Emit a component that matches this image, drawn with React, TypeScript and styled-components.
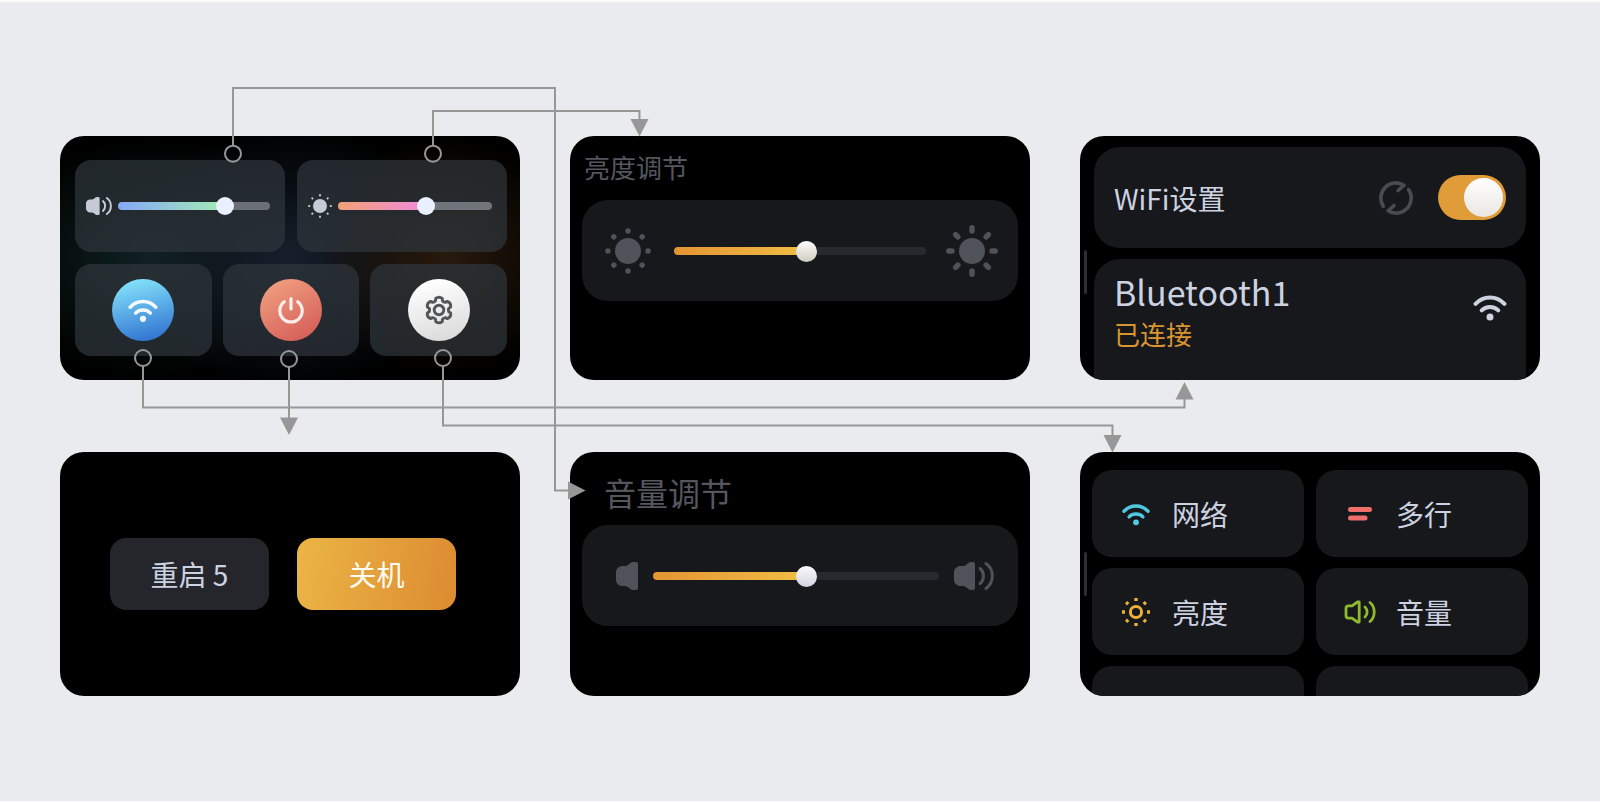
import React, { useId, useState } from 'react';
import styled, { createGlobalStyle } from 'styled-components';

const GlobalStyle = createGlobalStyle`
  *, *::before, *::after { box-sizing: border-box; }
  body {
    margin: 0;
    background: #e9ebef;
    font-family: "Noto Sans CJK SC", "Noto Sans", sans-serif;
  }
  h2, p { margin: 0; padding: 0; }
  button, input { font: inherit; }
  svg { display: block; flex: none; }
`;

const Board = styled.main`
  position: relative;
  display: grid;
  grid-template-columns: repeat(3, minmax(0, 1fr));
  column-gap: 50px;
  row-gap: 72px;
  padding: 134px 60px 105px;
  border-top: 2px solid #fafafb;
  border-bottom: 1px solid #fafafb;
`;

const Screen = styled.section<{ $pad: string }>`
  position: relative;
  display: flex;
  flex-direction: column;
  height: 244px;
  overflow: hidden;
  border-radius: 24px;
  background: #000;
  padding: ${(p) => p.$pad};
`;

const HomeScreen = styled(Screen)`
  gap: 12px;
  background:
    radial-gradient(ellipse 130px 120px at 84% 49%, rgba(44, 28, 15, 0.9) 0%, rgba(38, 24, 12, 0.6) 45%, transparent 100%),
    radial-gradient(ellipse 170px 130px at 50% 50%, rgba(22, 31, 44, 1) 0%, rgba(19, 27, 38, 0.55) 50%, transparent 100%),
    radial-gradient(ellipse 170px 120px at 20% 50%, rgba(16, 34, 35, 1) 0%, rgba(13, 29, 30, 0.55) 50%, transparent 100%),
    #000;
`;

const TileRow = styled.div<{ $gap: number }>`
  display: flex;
  flex: 1;
  gap: ${(p) => p.$gap}px;
`;

const GlassTile = styled.div`
  display: flex;
  flex: 1;
  align-items: center;
  justify-content: center;
  border-radius: 16px;
  background: rgba(47, 54, 60, 0.7);
`;

const SliderTile = styled(GlassTile)`
  gap: 6px;
  padding: 0 15px 0 11px;
  min-width: 0;
`;

const RoundButton = styled.button<{ $fill: string }>`
  display: grid;
  place-items: center;
  width: 62px;
  height: 62px;
  padding: 0;
  border: 0;
  border-radius: 50%;
  background: ${(p) => p.$fill};
  cursor: pointer;
`;

type RangeLook = { $fill: string; $rail: string; $thumb: string; $size: number };

const Range = styled.input<RangeLook>`
  appearance: none;
  flex: 1;
  min-width: 0;
  height: ${(p) => p.$size}px;
  margin: 0;
  background: none;
  cursor: pointer;

  &::-webkit-slider-runnable-track {
    height: 8px;
    border-radius: 4px;
    background:
      ${(p) => p.$fill} 0 0 / var(--level) 100% no-repeat,
      ${(p) => p.$rail};
  }
  &::-webkit-slider-thumb {
    appearance: none;
    width: ${(p) => p.$size}px;
    height: ${(p) => p.$size}px;
    margin-top: ${(p) => Math.round((8 - p.$size) / 2)}px;
    border-radius: 50%;
    background: ${(p) => p.$thumb};
  }
`;

const Title = styled.h2<{ $size: number; $indent: number }>`
  padding-left: ${(p) => p.$indent}px;
  font-size: ${(p) => p.$size}px;
  line-height: 38px;
  font-weight: 400;
  color: #55575e;
`;

const SliderPanel = styled.div<{ $pad: string; $gap: number }>`
  display: flex;
  align-items: center;
  gap: ${(p) => p.$gap}px;
  height: 101px;
  margin-top: 14px;
  padding: ${(p) => p.$pad};
  border-radius: 26px;
  background: #17181c;
  color: #50525a;
`;

const ListPanel = styled.div`
  display: flex;
  flex: none;
  align-items: center;
  height: 101px;
  padding: 0 20px;
  border-radius: 26px;
  background: #17181c;
  color: #cdd2e0;
`;

const DevicePanel = styled(ListPanel)`
  align-items: flex-start;
  height: auto;
  margin-top: 11px;
  padding: 11px 19px 60px 20px;
`;

const Label = styled.label`
  flex: 1;
  font-size: 28px;
  line-height: 40px;
`;

const Refresh = styled.button`
  display: grid;
  place-items: center;
  margin-right: 24px;
  padding: 0;
  border: 0;
  background: none;
  color: #474b52;
  cursor: pointer;
`;

const Toggle = styled.input`
  appearance: none;
  width: 68px;
  height: 45px;
  margin: 0;
  padding: 3px;
  border-radius: 23px;
  background: #50525a;
  cursor: pointer;

  &::before {
    content: "";
    display: block;
    width: 39px;
    height: 39px;
    border-radius: 50%;
    background: linear-gradient(#ffffff, #e9e7e3);
  }
  &:checked { background: #e09c38; }
  &:checked::before { margin-left: 23px; }
`;

const Device = styled.div`
  flex: 1;
`;

const DeviceName = styled.p`
  font-size: 34px;
  line-height: 44px;
`;

const DeviceState = styled.p`
  font-size: 26px;
  line-height: 40px;
  color: #d99530;
`;

const Signal = styled.div`
  padding-top: 20px;
`;

const ScrollMark = styled.span<{ $top: string }>`
  position: absolute;
  left: 4px;
  top: ${(p) => p.$top};
  width: 3px;
  height: 44px;
  border-radius: 2px;
  background: #2e2e32;
`;

const PowerRow = styled.div`
  display: flex;
  gap: 28px;
`;

const PowerButton = styled.button<{ $primary?: boolean }>`
  width: 159px;
  height: 72px;
  padding: 0;
  border: 0;
  border-radius: 16px;
  font-size: 28px;
  line-height: 40px;
  background: ${(p) => (p.$primary ? 'linear-gradient(100deg, #ebb545 0%, #dd8d32 95%)' : '#25262b')};
  color: ${(p) => (p.$primary ? '#fffdf4' : '#cdd2e0')};
  cursor: pointer;
`;

const MenuGrid = styled.div`
  display: grid;
  grid-template-columns: 1fr 1fr;
  grid-auto-rows: 87px;
  column-gap: 12px;
  row-gap: 11px;
`;

const MenuButton = styled.button`
  display: flex;
  align-items: center;
  gap: 20px;
  padding: 0 28px;
  border: 0;
  border-radius: 20px;
  background: #17181c;
  color: #cdd2e0;
  font-size: 28px;
  line-height: 40px;
  cursor: pointer;
`;

const Overlay = styled.svg`
  position: absolute;
  left: 0;
  top: -2px;
  width: 100%;
  height: calc(100% + 3px);
  pointer-events: none;
`;

/* ---------- icons ---------- */

type WifiProps = { w: number; color?: string; inset?: number };

const WifiIcon = ({ w, color = 'currentColor', inset = 0 }: WifiProps) => (
  <svg
    width={w}
    height={w}
    viewBox={`${-inset} ${-inset} ${32 + inset * 2} ${32 + inset * 2}`}
    fill="none"
    stroke={color}
    strokeWidth="3.800"
    strokeLinecap="round"
  >
    <path d="M2.4 13C9.800 5 22.200 5 29.600 13" />
    <path d="M8.200 19.200C12.400 15 19.600 15 23.800 19.200" />
    <circle cx="16" cy="25.400" r="3.300" fill={color} stroke="none" />
  </svg>
);

const angles = [0, 45, 90, 135, 180, 225, 270, 315];

type SunProps = {
  size: number;
  core: number;
  from: number;
  to: number;
  ray: number;
  color?: string;
  hollow?: boolean;
  cap?: 'round' | 'butt';
};

const SunIcon = ({ size, core, from, to, ray, color = 'currentColor', hollow, cap = 'round' }: SunProps) => (
  <svg width={size} height={size} viewBox={`${-size / 2} ${-size / 2} ${size} ${size}`}>
    <circle r={core} fill={hollow ? 'none' : color} stroke={hollow ? color : 'none'} strokeWidth="3" />
    {angles.map((a) => (
      <line key={a} y1={-from} y2={-to} stroke={color} strokeWidth={ray} strokeLinecap={cap} transform={`rotate(${a})`} />
    ))}
  </svg>
);

const HornIcon = () => (
  <svg width="22" height="28" viewBox="0 0 22 28">
    <path d="M5 4H9Q11 4 12.500 2.500L14.500 1Q15.500 0 17 0H20Q22 0 22 2V26Q22 28 20 28H17Q15.500 28 14.500 27L12.500 25.500Q11 24 9 24H5Q0 22 0 18V10Q0 6 5 4Z" fill="currentColor" />
  </svg>
);

const LoudIcon = ({ w, h, color = 'currentColor' }: { w: number; h: number; color?: string }) => (
  <svg width={w} height={h} viewBox="0 0 40 28" fill="none" stroke={color} strokeWidth="3" strokeLinecap="round">
    <path d="M5 4H9Q11 4 12.500 2.500L14.500 1Q15.500 0 17 0H19Q21 0 21 2V26Q21 28 19 28H17Q15.500 28 14.500 27L12.500 25.500Q11 24 9 24H5Q0 22 0 18V10Q0 6 5 4Z" fill={color} stroke="none" />
    <path d="M26.200 6.500C30.500 10 30.500 18 26.200 21.500" />
    <path d="M32 1.600C40.400 7.500 40.400 20.500 32 26.400" />
  </svg>
);

const LoudOutlineIcon = () => (
  <svg width="32" height="24" viewBox="0 0 32 24" fill="none" stroke="#8fb92f" strokeWidth="2.800" strokeLinecap="round" strokeLinejoin="round">
    <path d="M4.500 5.800H8L13.500 2H15.200V22H13.500L8 18.200H4.500Q2 18.200 2 15.500V8.500Q2 5.800 4.500 5.800Z" />
    <path d="M21 7C23.800 9.500 23.800 14.500 21 17" />
    <path d="M26 2.500C31.600 7 31.600 17 26 21.500" />
  </svg>
);

const LinesIcon = () => (
  <svg width="32" height="16" viewBox="0 0 32 16" stroke="#ef6f6a" strokeWidth="5" strokeLinecap="round">
    <path d="M6.500 3.500H25.500M6.500 12H21" />
  </svg>
);

const PowerIcon = () => (
  <svg width="30" height="30" viewBox="0 0 30 30" fill="none" stroke="#fdeeea" strokeWidth="3.200" strokeLinecap="round">
    <path d="M15 3.500V14" />
    <path d="M8.300 6.800A11.200 11.200 0 1 0 21.700 6.800" />
  </svg>
);

const gearPath = (() => {
  const pts: string[] = [];
  for (let i = 0; i < 6; i += 1) {
    const at = (deg: number, r: number) => {
      const t = ((i * 60 + deg - 90) * Math.PI) / 180;
      return `${(r * Math.cos(t)).toFixed(2)} ${(r * Math.sin(t)).toFixed(2)}`;
    };
    pts.push(`${i ? 'L' : 'M'}${at(-16, 12)}`, `Q${at(0, 14.2)} ${at(16, 12)}`, `L${at(20, 10)}`, `Q${at(30, 9)} ${at(40, 10)}`);
  }
  return `${pts.join('')}Z`;
})();

const GearIcon = () => (
  <svg width="32" height="32" viewBox="-16 -16 32 32" fill="none" stroke="#55565a" strokeWidth="2.900" strokeLinejoin="round">
    <path d={gearPath} />
    <circle r="4.800" />
  </svg>
);

const RefreshIcon = () => (
  <svg width="36" height="36" viewBox="-18 -18 36 36" fill="none" stroke="currentColor" strokeWidth="3.600" strokeLinecap="round" strokeLinejoin="round">
    <path d="M-12.600 8.400A15.100 15.100 0 0 1 8 -12.800L2 -7.500" />
    <path d="M12.600 -8.400A15.100 15.100 0 0 1 -8 12.800L-2 7.500" />
  </svg>
);

/* ---------- controls ---------- */

type SliderProps = RangeLook & { label: string; start: number };

const Slider = ({ label, start, ...look }: SliderProps) => {
  const [value, setValue] = useState(start);
  return (
    <Range
      type="range"
      aria-label={label}
      min={0}
      max={100}
      value={value}
      onChange={(e) => setValue(Number(e.target.value))}
      style={{ '--level': `${value}%` } as React.CSSProperties}
      {...look}
    />
  );
};

const amber = 'linear-gradient(90deg, #e59433, #efbe45)';

const Connectors = () => (
  <Overlay viewBox="0 0 1600 802" preserveAspectRatio="none" aria-hidden="true">
    <g fill="none" stroke="#979797" strokeWidth="2">
      <path d="M233 146V88H555V490.500H569" />
      <path d="M433 146V111H639.500V120" />
      <path d="M143 366V407.500H1184.500V399" />
      <path d="M289 367V418" />
      <path d="M443 366V425.500H1112.500V436" />
      <circle cx="233" cy="153.700" r="8" />
      <circle cx="433" cy="153.700" r="8" />
      <circle cx="143" cy="358" r="8" />
      <circle cx="289" cy="359" r="8" />
      <circle cx="443" cy="358" r="8" />
    </g>
    <g fill="#979797">
      <path d="M568 481.500V499.500L585.500 490.500Z" />
      <path d="M630.500 119H648.500L639.500 136.500Z" />
      <path d="M1175.500 399.500H1193.500L1184.500 382Z" />
      <path d="M280 417.500H298L289 435Z" />
      <path d="M1103.500 435H1121.500L1112.500 452.500Z" />
    </g>
  </Overlay>
);

export default function App() {
  const wifiId = useId();
  const [wifi, setWifi] = useState(true);

  return (
    <>
      <GlobalStyle />
      <Board>
        <HomeScreen $pad="24px 13px 24px 15px">
          <TileRow $gap={12}>
            <SliderTile>
              <LoudIcon w={26} h={20} color="#c6cad6" />
              <Slider label="音量" start={73} $size={18} $fill="linear-gradient(90deg, #86a8f8, #a4efb0)" $rail="#6d6f77" $thumb="#e9f0ff" />
            </SliderTile>
            <SliderTile>
              <SunIcon size={24} core={7} from={10.6} to={11} ray={2} color="#c6cad6" />
              <Slider label="亮度" start={58} $size={18} $fill="linear-gradient(90deg, #f2a078, #f08bdc)" $rail="#70747b" $thumb="#e9f0ff" />
            </SliderTile>
          </TileRow>
          <TileRow $gap={11}>
            <GlassTile>
              <RoundButton aria-label="网络" $fill="linear-gradient(165deg, #86e6fb 5%, #2d6fd0 95%)">
                <WifiIcon w={30} color="#f4faff" />
              </RoundButton>
            </GlassTile>
            <GlassTile>
              <RoundButton aria-label="电源" $fill="linear-gradient(150deg, #f2a181 5%, #d35a57 95%)">
                <PowerIcon />
              </RoundButton>
            </GlassTile>
            <GlassTile>
              <RoundButton aria-label="设置" $fill="linear-gradient(165deg, #ffffff 10%, #d9d9d9 95%)">
                <GearIcon />
              </RoundButton>
            </GlassTile>
          </TileRow>
        </HomeScreen>

        <Screen $pad="12px">
          <Title $size={26} $indent={2}>亮度调节</Title>
          <SliderPanel $pad="0 20px" $gap={20}>
            <SunIcon size={52} core={13} from={20} to={20.1} ray={5.4} />
            <Slider label="亮度调节" start={53} $size={21} $fill={amber} $rail="#28292e" $thumb="linear-gradient(#fdfdfb, #cfcbc0)" />
            <SunIcon size={52} core={13} from={20} to={23.2} ray={5.4} />
          </SliderPanel>
        </Screen>

        <Screen $pad="11px 14px 0">
          <ListPanel>
            <Label htmlFor={wifiId}>WiFi设置</Label>
            <Refresh aria-label="刷新">
              <RefreshIcon />
            </Refresh>
            <Toggle id={wifiId} type="checkbox" checked={wifi} onChange={(e) => setWifi(e.target.checked)} />
          </ListPanel>
          <DevicePanel>
            <Device>
              <DeviceName>Bluetooth1</DeviceName>
              <DeviceState>已连接</DeviceState>
            </Device>
            <Signal>
              <WifiIcon w={34} />
            </Signal>
          </DevicePanel>
          <ScrollMark $top="114px" />
        </Screen>

        <Screen $pad="86px 50px">
          <PowerRow>
            <PowerButton>重启 5</PowerButton>
            <PowerButton $primary>关机</PowerButton>
          </PowerRow>
        </Screen>

        <Screen $pad="21px 12px 12px">
          <Title $size={32} $indent={22}>音量调节</Title>
          <SliderPanel $pad="0 24px 0 34px" $gap={15}>
            <HornIcon />
            <Slider label="音量调节" start={54} $size={21} $fill={amber} $rail="#28292e" $thumb="linear-gradient(#fbfbfd, #d3d4e2)" />
            <LoudIcon w={40} h={28} />
          </SliderPanel>
        </Screen>

        <Screen $pad="18px 12px 0">
          <MenuGrid>
            <MenuButton>
              <WifiIcon w={32} color="#4fc9e2" inset={2} />
              网络
            </MenuButton>
            <MenuButton>
              <LinesIcon />
              多行
            </MenuButton>
            <MenuButton>
              <SunIcon size={32} core={5.6} from={11} to={14} ray={3.4} color="#eeb038" hollow cap="butt" />
              亮度
            </MenuButton>
            <MenuButton>
              <LoudOutlineIcon />
              音量
            </MenuButton>
            <MenuButton aria-label="更多" />
            <MenuButton aria-label="更多" />
          </MenuGrid>
          <ScrollMark $top="100px" />
        </Screen>

        <Connectors />
      </Board>
    </>
  );
}
